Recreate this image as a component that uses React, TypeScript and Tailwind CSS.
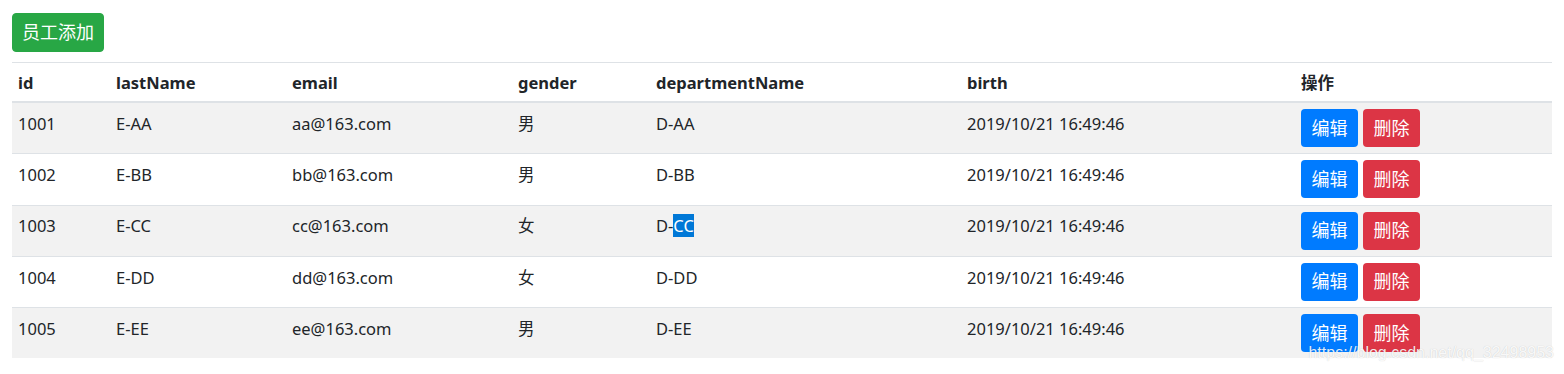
const rows = [
  { id: 1001, lastName: 'E-AA', email: 'aa@163.com', gender: '男', dept: 'D-AA' },
  { id: 1002, lastName: 'E-BB', email: 'bb@163.com', gender: '男', dept: 'D-BB' },
  { id: 1003, lastName: 'E-CC', email: 'cc@163.com', gender: '女', dept: 'D-CC' },
  { id: 1004, lastName: 'E-DD', email: 'dd@163.com', gender: '女', dept: 'D-DD' },
  { id: 1005, lastName: 'E-EE', email: 'ee@163.com', gender: '男', dept: 'D-EE' },
];

const headers = [
  { label: 'id', w: 'w-[98px]' },
  { label: 'lastName', w: 'w-[176px]' },
  { label: 'email', w: 'w-[226px]' },
  { label: 'gender', w: 'w-[138px]' },
  { label: 'departmentName', w: 'w-[311px]' },
  { label: 'birth', w: 'w-[334px]' },
  { label: '操作', w: 'w-[257px]' },
];

const td = 'border-t border-[#dee2e6] px-[6px] pt-[6.8px] pb-[6px] align-top leading-[27px]';

export default function App() {
  return (
    <div className="relative min-h-[374px] bg-white px-[12px] pt-[13px] font-['Noto_Sans','Noto_Sans_CJK_SC',sans-serif] text-[16.5px] text-[#212529]">
      <button className="flex h-[39px] w-[92px] items-center justify-center rounded-[4px] border border-[#28a745] bg-[#28a745] text-[18px] text-white">
        员工添加
      </button>
      <table className="mt-[10px] w-full table-fixed border-collapse text-left">
        <thead>
          <tr>
            {headers.map((h) => (
              <th
                key={h.label}
                className={`${h.w} border-t border-b-2 border-[#dee2e6] px-[6px] pt-[6px] pb-[5px] align-bottom font-bold leading-[27px]`}
              >
                {h.label}
              </th>
            ))}
          </tr>
        </thead>
        <tbody>
          {rows.map((r, i) => (
            <tr key={r.id} className={i % 2 === 0 ? 'bg-[#f2f2f2]' : 'bg-white'}>
              <td className={td}>{r.id}</td>
              <td className={td}>{r.lastName}</td>
              <td className={td}>{r.email}</td>
              <td className={td}>{r.gender}</td>
              <td className={td}>
                {r.id === 1003 ? (
                  <>
                    D-<span className="bg-[#0078d7] text-white">CC</span>
                  </>
                ) : (
                  r.dept
                )}
              </td>
              <td className={td}>2019/10/21 16:49:46</td>
              <td className="border-t border-[#dee2e6] px-[6px] pt-[6px] pb-[6.25px] align-top">
                <div className="flex gap-[5px]">
                  <button className="flex h-[38px] w-[57px] items-center justify-center rounded-[4px] bg-[#007bff] text-[18px] text-white">
                    编辑
                  </button>
                  <button className="flex h-[38px] w-[57px] items-center justify-center rounded-[4px] bg-[#dc3545] text-[18px] text-white">
                    删除
                  </button>
                </div>
              </td>
            </tr>
          ))}
        </tbody>
      </table>
      <div className="absolute top-[343px] right-[10px] font-['Liberation_Sans',sans-serif] text-[16px] leading-[20px] text-[#ffffffe6] [text-shadow:0_0_1px_rgba(0,0,0,0.2)]">
        https://blog.csdn.net/qq_32498953
      </div>
    </div>
  );
}
